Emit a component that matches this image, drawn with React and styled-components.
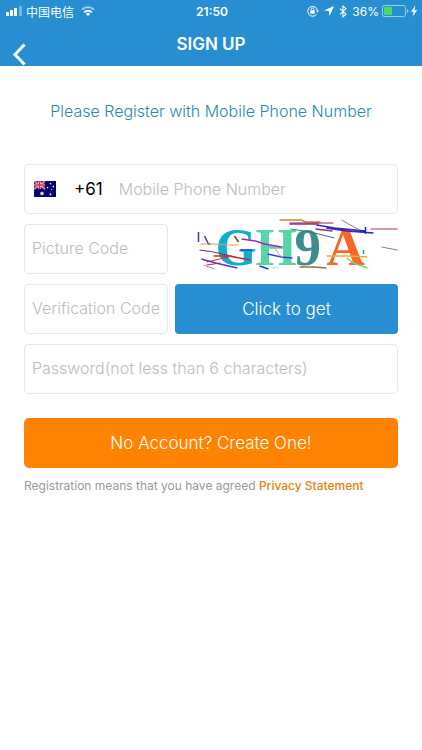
import styled, { createGlobalStyle } from 'styled-components';

const App = () => {
  return (
    <Page>
      <GlobalStyle />
      <Header>
        <StatusBar>
          <StatusSide>
            <SignalIcon />
            <span>中国电信</span>
            <WifiIcon />
          </StatusSide>
          <Clock>21:50</Clock>
          <StatusSide $end>
            <LockIcon />
            <LocationIcon />
            <BluetoothIcon />
            <span>36%</span>
            <BatteryIcon />
          </StatusSide>
        </StatusBar>
        <NavBar>
          <BackButton type='button' aria-label='Back'>
            <svg width='14' height='24' viewBox='0 0 14 24' fill='none'>
              <path d='M12.5 2.5 3 12.5l9.500 10' stroke='#fff' strokeWidth='3' />
            </svg>
          </BackButton>
          <h1>SIGN UP</h1>
        </NavBar>
      </Header>
      <Form onSubmit={(e) => e.preventDefault()}>
        <h2>Please Register with Mobile Phone Number</h2>
        <PhoneField>
          <FlagIcon />
          <span>+61</span>
          <input type='tel' aria-label='Mobile Phone Number' placeholder='Mobile Phone Number' />
        </PhoneField>
        <Row>
          <Field type='text' aria-label='Picture Code' placeholder='Picture Code' />
          <Captcha />
        </Row>
        <Row>
          <Field type='text' aria-label='Verification Code' placeholder='Verification Code' />
          <Button type='button'>Click to get</Button>
        </Row>
        <Field
          type='password'
          aria-label='Password'
          placeholder='Password(not less than 6 characters)'
        />
        <SubmitButton type='submit'>No Account? Create One!</SubmitButton>
        <Agreement>
          Registration means that you have agreed <a href='#privacy'>Privacy Statement</a>
        </Agreement>
      </Form>
    </Page>
  );
};

const SignalIcon = () => (
  <svg width='17' height='10' viewBox='0 0 17 10' fill='#fff'>
    <rect x='0' y='6' width='3' height='4' rx='0.6' />
    <rect x='4' y='4' width='3' height='6' rx='0.6' />
    <rect x='8' y='2' width='3' height='8' rx='0.6' />
    <rect x='13' y='0' width='3' height='10' rx='0.6' opacity='0.35' />
  </svg>
);

const WifiIcon = () => (
  <svg width='14' height='10' viewBox='0 0 14 10' fill='none' stroke='#fff' strokeWidth='1.8'>
    <path d='M1 3.7a8.5 8.5 0 0 1 12 0' opacity='0.6' />
    <path d='M3.2 6.300a5.400 5.400 0 0 1 7.600 0' />
    <path d='M7 10 4.9 7.9a3 3 0 0 1 4.2 0Z' fill='#fff' stroke='none' />
  </svg>
);

const LockIcon = () => (
  <svg width='12' height='12' viewBox='0 0 12 12' fill='none' stroke='#fff'>
    <path d='M9.6 9.3A4.9 4.9 0 1 1 10.4 5' />
    <path d='m8.8 5.4 1.7 2 1.5-2Z' fill='#fff' stroke='none' />
    <rect x='3.3' y='5.3' width='4.4' height='3.4' fill='#fff' stroke='none' />
    <path d='M4.2 5.5V4.3a1.3 1.3 0 0 1 2.6 0v1.2' strokeWidth='0.9' />
  </svg>
);

const LocationIcon = () => (
  <svg width='10' height='10' viewBox='0 0 10 10' fill='#fff'>
    <path d='M10 0 5.6 10 4.9 5.1 0 4.4Z' />
  </svg>
);

const BluetoothIcon = () => (
  <svg width='8' height='13' viewBox='0 0 8 13' fill='none' stroke='#fff' strokeWidth='1.1'>
    <path d='m1 3.6 6 5.6-3 2.6V1.2l3 2.6-6 5.6' />
  </svg>
);

const BatteryIcon = () => (
  <svg width='36' height='12' viewBox='0 0 36 12'>
    <rect x='0.5' y='0.5' width='23' height='11' rx='2' fill='none' stroke='#9bd0ee' />
    <rect x='2' y='2' width='8' height='8' rx='0.5' fill='#4cd964' />
    <path d='M25 4v4q1.3-.6 1.3-2T25 4Z' fill='#9bd0ee' />
    <path d='M33.4.5 29 6.8h2.6l-1 4.7L35.2 5h-2.7Z' fill='#fff' />
  </svg>
);

const FlagIcon = () => (
  <svg width='22' height='16' viewBox='0 0 22 16'>
    <rect width='22' height='16' fill='#06066e' />
    <path d='m0 0 11 8M11 0 0 8' stroke='#f4c6d2' strokeWidth='1.8' />
    <path d='m0 0 11 8M11 0 0 8' stroke='#dc2a4c' strokeWidth='0.7' />
    <path d='M5.5 0v8M0 4h11' stroke='#fff' strokeWidth='2.4' />
    <path d='M5.5 0v8M0 4h11' stroke='#e0203e' strokeWidth='1.4' />
    <g fill='#fff'>
      <path d='m8 10.2.6 1.3 1.4-.2-.8 1.2.8 1.2-1.4-.1L8 15l-.6-1.4-1.4.1.8-1.2-.8-1.2 1.4.2Z' />
      <circle cx='16.5' cy='2.8' r='0.8' />
      <circle cx='13.6' cy='6.6' r='0.8' />
      <circle cx='19.4' cy='5.6' r='0.8' />
      <circle cx='17.7' cy='8.6' r='0.5' />
      <circle cx='16.5' cy='13.4' r='0.9' />
    </g>
  </svg>
);

const Captcha = () => (
  <CaptchaImage viewBox='0 0 222 50' role='img' aria-label='Picture code'>
    <g fontSize='53' fontWeight='700'>
      <text x='40' y='41' fill='#10adcf'>G</text>
      <text x='80' y='41' fill='#58d5a6'>H</text>
      <text x='119' y='41' fill='#3f8c8e'>9</text>
      <text x='151' y='41' fill='#fb6529'>A</text>
    </g>
    <g fill='none' strokeWidth='1'>
      <path d='M23 8v10M29 12l4 8h2' stroke='#4b33a6' strokeWidth='1.500' />
      <path d='M25 20h13l16 1h9' stroke='#e79c38' />
      <path d='m59 12 4 6' stroke='#7a4524' strokeWidth='1.500' />
      <path d='m24 26 14 2 22 5' stroke='#5f3c5d' />
      <path d='M38 32h15l22 4' stroke='#d12724' strokeWidth='1.500' />
      <path d='m31 38 22-5M31 41l14-2' stroke='#b52f4b' />
      <path d='m26 35 14 4 22 5' stroke='#7929bb' strokeWidth='1.500' />
      <path d='m28 41 11 4' stroke='#c777c5' />
      <path d='M66 15l14 2 9 3 17 3' stroke='#a12bad' strokeWidth='1.500' />
      <path d='M65 26h12M92 30l14 3 11 1' stroke='#343fd1' strokeWidth='1.500' />
      <path d='m84 42 9 3' stroke='#263ca7' strokeWidth='1.500' />
      <path d='M96 44h7' stroke='#a5dbc1' />
      <path d='m98 23 8 10' stroke='#bda2c8' />
      <path d='M104-4h22l4 2h15' stroke='#c48929' strokeWidth='1.500' />
      <path d='M114 0h29M140 5l17 2' stroke='#9d249c' strokeWidth='1.500' />
      <path d='M114-1h44' stroke='#8c246d' />
      <path d='m115 5 20 3 24 6' stroke='#367c6d' />
      <path d='m141 1 18 3 31 3M151 4l20 3 27 2M190 3v7' stroke='#3028bd' strokeWidth='1.500' />
      <path d='m166-4 18 10' stroke='#8c7a97' />
      <path d='M195 5h27' stroke='#9c3861' />
      <path d='m206 23 16 3' stroke='#7e70d4' />
      <path d='M188 26v4' stroke='#3c8dac' strokeWidth='1.500' />
      <path d='M151 32h24l17 1' stroke='#e5ae35' strokeWidth='1.500' />
      <path d='m171 34 7 5 14 5' stroke='#72d66c' strokeWidth='1.500' />
      <path d='M124 43h14l13 1' stroke='#957035' strokeWidth='1.500' />
    </g>
  </CaptchaImage>
);

const GlobalStyle = createGlobalStyle`
  * {
    box-sizing: border-box;
  }

  body {
    margin: 0;
    background-color: #fff;
    font-family: Inter, 'Noto Sans CJK SC', sans-serif;
  }

  button,
  input {
    font-family: inherit;
  }

  svg {
    display: block;
    flex-shrink: 0;
  }
`;

const Page = styled.div`
  min-height: 100vh;
`;

const Header = styled.header`
  background-color: #278fd1;
  color: #fff;
`;

const StatusBar = styled.div`
  display: grid;
  grid-template-columns: 1fr auto 1fr;
  align-items: center;
  height: 22px;
  padding: 0 4px 0 6px;
  font-size: 12px;
`;

const StatusSide = styled.div`
  display: flex;
  align-items: center;
  justify-content: ${({ $end }) => ($end ? 'flex-end' : 'flex-start')};
  gap: ${({ $end }) => ($end ? '5px' : '3px')};

  span + svg {
    margin-left: ${({ $end }) => ($end ? '-2px' : '4px')};
  }
`;

const Clock = styled.span`
  font-weight: 600;
`;

const NavBar = styled.div`
  display: grid;
  grid-template-columns: 44px 1fr 44px;
  align-items: center;
  height: 44px;

  h1 {
    margin: 0;
    font-size: 17px;
    font-weight: 600;
    line-height: 42px;
    text-align: center;
  }
`;

const BackButton = styled.button`
  align-self: end;
  width: 44px;
  height: 24px;
  padding: 0 12px;
  border: 0;
  background: none;
`;

const Form = styled.form`
  display: flex;
  flex-direction: column;
  gap: 10px;
  padding: 0 24px;

  h2 {
    margin: 35px 0 32px;
    color: #2b87b5;
    font-size: 16px;
    font-weight: 300;
    line-height: 21px;
    text-align: center;
  }
`;

const Row = styled.div`
  display: grid;
  grid-template-columns: 144px 1fr;
  gap: 7px;
`;

const Field = styled.input`
  width: 100%;
  height: 50px;
  padding: 0 0 2px 7px;
  border: 1px solid #e6e6e8;
  border-radius: 5px;
  background-color: #fff;
  font-size: 16px;
  font-weight: 300;
  outline: none;

  &::placeholder {
    color: #bcbcc2;
  }
`;

const PhoneField = styled.label`
  display: flex;
  align-items: center;
  height: 50px;
  padding-left: 9px;
  border: 1px solid #e6e6e8;
  border-radius: 5px;

  span {
    margin: 0 16px 0 18px;
    font-size: 17px;
  }

  input {
    flex: 1;
    min-width: 0;
    padding: 0;
    border: 0;
    font-size: 16px;
    font-weight: 300;
    outline: none;
  }

  input::placeholder {
    color: #bcbcc2;
  }
`;

const CaptchaImage = styled.svg`
  width: 100%;
  height: 50px;
  overflow: visible;
  font-family: 'Liberation Serif', serif;
`;

const Button = styled.button`
  height: 50px;
  border: 0;
  border-radius: 4px;
  background-color: #278fd1;
  color: #fff;
  font-size: 17px;
  font-weight: 300;
`;

const SubmitButton = styled(Button)`
  margin-top: 14px;
  border-radius: 5px;
  background-color: #ff8300;
`;

const Agreement = styled.p`
  margin: 0;
  color: #999;
  font-size: 12px;
  line-height: 16px;

  a {
    color: #e8820c;
    font-weight: 500;
    text-decoration: none;
  }
`;

export default App;
